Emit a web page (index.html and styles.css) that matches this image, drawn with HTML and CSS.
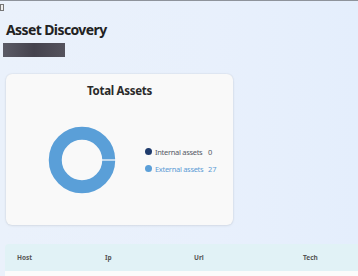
FILE: index.html
```html
<!DOCTYPE html>
<html lang="en">
<head>
  <meta charset="UTF-8">
  <title>Asset Discovery</title>
  <link rel="stylesheet" href="styles.css">
</head>
<body>
  <span class="broken"></span>
  <div class="page">
    <h1>Asset Discovery</h1>
    <div class="redacted"></div>

    <div class="card">
      <h2>Total Assets</h2>
      <div class="chart-row">
        <svg class="donut" width="68" height="68" viewBox="0 0 68 68">
          <circle cx="34" cy="34" r="26.75" fill="none" stroke="#5a9fd8" stroke-width="13"></circle>
          <line x1="54" y1="34" x2="68" y2="34" stroke="#ffffff" stroke-width="1.2"></line>
        </svg>
        <ul class="legend">
          <li><span class="dot navy"></span><span class="label">Internal assets</span><span class="val">0</span></li>
          <li class="ext"><span class="dot light"></span><span class="label">External assets</span><span class="val">27</span></li>
        </ul>
      </div>
    </div>

    <div class="table-wrap">
      <table class="assets">
        <thead>
          <tr><th class="c-host">Host</th><th class="c-ip">Ip</th><th class="c-url">Url</th><th class="c-tech">Tech</th></tr>
        </thead>
        <tbody>
          <tr><td colspan="4"></td></tr>
        </tbody>
      </table>
    </div>
  </div>
</body>
</html>
```

FILE: styles.css
```css
html { border-top: 1px solid #8e939b; }
body { margin: 0; font-family: "Noto Sans", sans-serif; background: linear-gradient(90deg, #eaf1fb 0%, #e8f0fc 60%, #e4eefc 100%); min-height: 275px; overflow: hidden; position: relative; }
.broken { position: absolute; left: 0; top: 3px; width: 2px; height: 5px; border: 1px solid #777; background: #eee; }
.page { padding: 20px 0 0 6px; }
h1 { margin: 0; font-size: 14px; font-weight: 700; color: #222; line-height: 18px; letter-spacing: -0.6px; }
.redacted { margin: 4px 0 0 -3px; width: 62px; height: 14px; background: linear-gradient(90deg, #5b5b66, #45434e 50%, #55535d); }
.card { margin-top: 17px; width: 227px; height: 151px; background: #f9f9f9; border-radius: 6px; box-shadow: 0 0 2px rgba(0,0,0,0.12), 0 1px 3px rgba(0,0,0,0.06); box-sizing: border-box; padding-top: 10px; }
h2 { margin: 0; text-align: center; font-size: 11.5px; font-weight: 700; color: #2a2a2a; line-height: 14px; letter-spacing: -0.3px; }
.chart-row { display: flex; align-items: center; margin-top: 28px; padding-left: 42px; }
.donut { display: block; }
.legend { list-style: none; margin: 0 0 0 29px; padding: 0; display: flex; flex-direction: column; gap: 7px; }
.legend li { display: flex; align-items: center; font-size: 7.5px; color: #555a66; line-height: 10px; }
.legend li.ext { color: #5b9bd5; }
.dot { width: 7px; height: 7px; border-radius: 50%; margin-right: 3px; }
.dot.navy { background: #1f3b6c; }
.dot.light { background: #5b9fd8; }
.label { width: 51px; letter-spacing: -0.3px; }
.val { margin-left: 2px; }
.table-wrap { margin: 19px 0 0 -1px; overflow: hidden; }
.assets { width: 420px; border-collapse: collapse; font-size: 6.5px; }
.assets thead th { background: #e1f2f6; height: 27px; padding: 0; text-align: left; font-weight: 700; color: #555; }
.assets thead th.c-host { padding-left: 12px; width: 88px; border-top-left-radius: 4px; }
.assets thead th.c-ip { width: 89px; }
.assets thead th.c-url { width: 109px; }
.assets td { background: #fbfbfb; height: 12px; }
```
